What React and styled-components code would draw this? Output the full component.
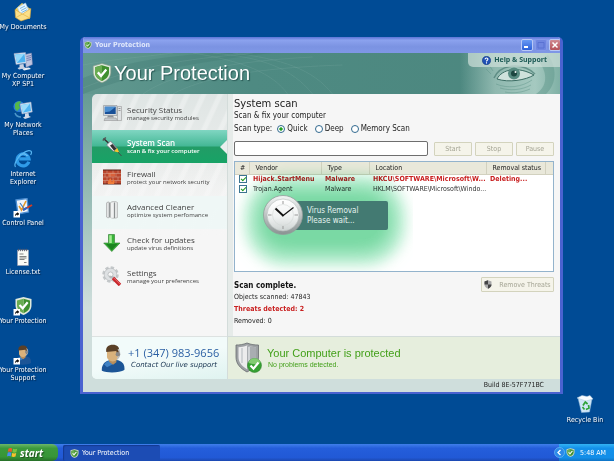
import React, { useState } from 'react';
import styled, { createGlobalStyle } from 'styled-components';

const GlobalStyle = createGlobalStyle`
  * {
    box-sizing: border-box;
  }

  body {
    margin: 0;
    background: #004b95;
    font-family: 'DejaVu Sans Condensed', 'DejaVu Sans', sans-serif;
    font-size: 7px;
    line-height: 8px;
    color: #222;
  }

  button, input {
    font: inherit;
    color: inherit;
    margin: 0;
  }

  button {
    cursor: pointer;
  }

  svg {
    display: block;
    flex: none;
  }
`;

const Page = styled.div`
  min-height: 100vh;
  display: flex;
  flex-direction: column;
`;

const Desktop = styled.main`
  flex: 1;
  display: grid;
  grid-template-columns: 80px minmax(0, 1fr) 51px;
`;

const IconColumn = styled.div`
  width: 46px;
  padding-top: 2px;
`;

const BinColumn = styled.div`
  align-self: end;
  padding-right: 7px;
`;

const Shortcut = styled.button`
  display: flex;
  flex-direction: column;
  align-items: center;
  gap: 1px;
  width: 100%;
  height: 49px;
  padding: 0;
  border: none;
  background: none;
  color: #fff;
  white-space: pre;
  text-align: center;
  text-shadow: 1px 1px 1px #00264f;
`;

/* application window */

const Window = styled.section`
  align-self: start;
  margin-top: 37px;
  border: 3px solid #4a62d0;
  border-top: none;
  border-bottom-width: 2px;
  border-radius: 5px 5px 0 0;
  background: #cfdedc;
  overflow: hidden;
`;

const TitleBar = styled.div`
  display: flex;
  align-items: center;
  gap: 2px;
  height: 16px;
  margin: 0 -3px;
  padding: 0 2px 0 4px;
  background: linear-gradient(#5b74d6, #8ba2ee 20%, #7b93e2 60%, #7f97e6);
`;

const TitleText = styled.h1`
  flex: 1;
  margin: 0;
  padding-left: 1px;
  font-size: 7px;
  color: #dfe7fb;
`;

const CaptionButton = styled.button`
  width: 12px;
  height: 12px;
  padding: 1px;
  border: 1px solid ${props => props.$edge || '#b8c8f6'};
  border-radius: 2px;
  background: ${props => props.$bg};
`;

const Banner = styled.header`
  position: relative;
  height: 41px;
  display: flex;
  align-items: center;
  justify-content: space-between;
  background: #4b867e;
  overflow: hidden;
`;

const BannerArt = styled.svg`
  position: absolute;
  top: 0;
  right: 0;
  width: 100%;
  height: 100%;
`;

const EyeArt = styled.svg`
  position: absolute;
  top: 0;
  right: 0;
`;

const Brand = styled.div`
  position: relative;
  display: flex;
  align-items: center;
  gap: 2px;
  padding-left: 9px;
  padding-bottom: 1px;
  font-family: 'Liberation Sans', Arial, sans-serif;
  font-size: 20px;
  line-height: 24px;
  color: #fff;
  text-shadow: 1px 1px 1px rgba(0, 40, 40, 0.5);
`;

const HelpLink = styled.a`
  position: relative;
  align-self: flex-start;
  display: flex;
  align-items: center;
  gap: 3px;
  height: 14px;
  padding: 0 13px 0 14px;
  border-radius: 0 0 0 5px;
  background: rgba(206, 224, 218, 0.7);
  font-family: 'Open Sans', 'Noto Sans', sans-serif;
  font-weight: 700;
  color: #1c5a55;
  text-decoration: none;
`;

const Content = styled.div`
  display: grid;
  grid-template-columns: 135px minmax(0, 1fr);
  padding-left: 9px;
  background: linear-gradient(#669b94, #a3c4be 45%, #cfdedc 75%);
`;

const Sidebar = styled.nav`
  display: flex;
  flex-direction: column;
  border-radius: 5px 0 0 5px;
  background: linear-gradient(transparent 25%, #f6f6f6 50%),
    repeating-linear-gradient(115deg, transparent 0 8px, rgba(255, 255, 255, 0.3) 10px 13px, transparent 15px),
    linear-gradient(#dfe5e4, #eceeed 28%, #f6f6f6 50%);
  overflow: hidden;
`;

const MenuButton = styled.button`
  position: relative;
  display: flex;
  align-items: center;
  gap: 5px;
  width: 100%;
  height: ${props => (props.$first ? 36 : 33)}px;
  padding: ${props => (props.$first ? '2px 0 0 10px' : props.$active ? '0 0 0 10px' : '0 0 5px 10px')};
  border: none;
  text-align: left;
  font-family: 'Open Sans', 'Noto Sans', sans-serif;
  color: ${props => (props.$active ? '#fff' : '#444')};
  background: ${props => {
    if (props.$active) return 'linear-gradient(#80d6c2, #45b896 48%, #229c66 52%, #17a366)';
    return props.$tint ? 'rgba(238, 248, 246, 0.8)' : 'none';
  }};

  &::after {
    content: '';
    display: ${props => (props.$active ? 'block' : 'none')};
    position: absolute;
    right: 0;
    top: 10px;
    border: solid transparent;
    border-width: 7px 7px 7px 0;
    border-right-color: #e9efee;
  }
`;

const MenuIcon = styled.span`
  width: 20px;
  display: flex;
  justify-content: center;
`;

const MenuTitle = styled.span`
  display: block;
  font-size: 8px;
  line-height: 9px;
  font-weight: ${props => (props.$active ? 600 : 400)};
`;

const MenuNote = styled.span`
  display: block;
  font-size: 6px;
  line-height: 8px;
  font-weight: ${props => (props.$active ? 600 : 500)};
`;

const Support = styled.div`
  display: flex;
  align-items: center;
  gap: 2px;
  height: 43px;
  margin-top: auto;
  padding-left: 9px;
  border-top: 1px solid #dde2e1;
  background: linear-gradient(170deg, #f2fbfa 50%, #dff3f0);
`;

const Phone = styled.div`
  font-family: 'Open Sans', 'Noto Sans', sans-serif;
  font-size: 11px;
  line-height: 14px;
  color: #2a5fa3;
`;

const Contact = styled.div`
  padding-left: 3px;
  font-family: 'DejaVu Sans', sans-serif;
  line-height: 10px;
  font-style: italic;
  color: #16324f;
`;

const Panel = styled.div`
  display: flex;
  flex-direction: column;
  background: #f6f6f6;
  border-left: 1px solid #d3dcda;
`;

const ScanArea = styled.div`
  flex: 1;
  padding: 4px 6px 9px 6px;
  background: linear-gradient(90deg, #e6ebe9 5px, #f6f6f6 5px);
`;

const Heading = styled.h2`
  margin: 0;
  font-family: 'DejaVu Sans', sans-serif;
  font-size: 10px;
  line-height: 12px;
  font-weight: 400;
`;

const Line = styled.div`
  font-size: 8px;
  line-height: 12px;
`;

const ScanTypes = styled.fieldset`
  display: flex;
  align-items: center;
  gap: 7px;
  height: 14px;
  margin: 0;
  padding: 0;
  border: none;
  font-size: 8px;

  label {
    display: flex;
    align-items: center;
    gap: 2px;
  }
`;

const TypeCaption = styled.span`
  margin-right: -2px;
`;

const Radio = styled.input`
  appearance: none;
  width: 8px;
  height: 8px;
  border: 1px solid #31698f;
  border-radius: 50%;
  background: #fff;

  &:checked {
    background: radial-gradient(#21a121 30%, #fff 50%);
  }
`;

const Toolbar = styled.div`
  display: flex;
  align-items: center;
  gap: 3px;
  margin: 5px 0;
`;

const Progress = styled.div`
  flex: 1;
  height: 15px;
  margin-right: 3px;
  border: 1px solid #6e6e6e;
  border-radius: 2px;
  background: #fff;
`;

const PushButton = styled.button`
  display: flex;
  align-items: center;
  justify-content: center;
  gap: 7px;
  width: ${props => (props.$wide ? 73 : 38)}px;
  height: ${props => (props.$wide ? 15 : 14)}px;
  padding: 0;
  border: 1px solid #d3d3bd;
  border-radius: 1px;
  background: #f5f4ea;
  color: #a5a595;
`;

const Results = styled.div`
  position: relative;
  height: 111px;
  border: 1px solid #93b3cc;
  background: #fff;
  overflow: hidden;
`;

const Table = styled.table`
  width: 100%;
  table-layout: fixed;
  border-collapse: collapse;
  white-space: nowrap;

  th {
    height: 12px;
    padding: 0 0 0 6px;
    background: #e9e8da;
    border-bottom: 1px solid #d2d1bf;
    border-right: 1px solid #d2d1bf;
    font-weight: 400;
    text-align: left;
  }

  th:first-child {
    padding-left: 5px;
  }

  th:last-child {
    border-right: none;
  }

  td {
    height: 10px;
    padding: 0 0 0 4px;
  }
`;

const Row = styled.tr`
  color: ${props => (props.$alert ? '#c92020' : '#333')};
  font-weight: ${props => (props.$alert ? 700 : 400)};
`;

const Check = styled.input`
  appearance: none;
  display: block;
  position: relative;
  z-index: 1;
  width: 8px;
  height: 8px;
  border: 1px solid #3b7490;
  background: #fff;

  &:checked::after {
    content: '';
    position: absolute;
    left: 2px;
    top: 0;
    width: 2px;
    height: 4px;
    border: solid #1d9a1d;
    border-width: 0 1px 1px 0;
    transform: rotate(45deg);
  }
`;

/* green halo behind the removal notice, cut off at its right edge */
const Glow = styled.div`
  position: absolute;
  left: 0;
  top: 0;
  width: 178px;
  height: 100%;
  overflow: hidden;
  mix-blend-mode: multiply;

  &::before {
    content: '';
    position: absolute;
    inset: 40px 34px 32px 36px;
    border-radius: 16px;
    background: #7ad9a4;
    box-shadow: 0 0 14px 12px #7ad9a4, 0 0 14px 26px rgba(150, 228, 185, 0.75);
  }
`;

const Toast = styled.div`
  position: absolute;
  left: 27px;
  top: 32px;
  display: flex;
  align-items: center;
`;

const ToastText = styled.div`
  width: 105px;
  height: 29px;
  margin-left: -21px;
  padding: 5px 0 0 24px;
  border-radius: 2px;
  background: #437a72;
  font-size: 8px;
  line-height: 10px;
  color: #e3f3ef;
`;

const ClockIcon = styled.svg`
  position: relative;
`;

const Summary = styled.div`
  display: flex;
  justify-content: space-between;
  align-items: flex-start;
  padding-top: 5px;
`;

const SummaryTitle = styled.div`
  padding-top: 4px;
  font-size: 8px;
  line-height: 10px;
  font-weight: 700;
  color: #111;
`;

const SummaryLine = styled.div`
  line-height: 12px;
  color: ${props => (props.$alert ? '#c92020' : '#222')};
  font-weight: ${props => (props.$alert ? 700 : 400)};
`;

const Status = styled.div`
  display: flex;
  align-items: center;
  gap: 5px;
  height: 43px;
  padding-left: 7px;
  border-top: 1px solid #d3dcda;
  background: #e6eedd;
  font-family: 'Liberation Sans', Arial, sans-serif;
  color: #43a01a;
`;

const StatusTitle = styled.div`
  font-size: 11px;
  line-height: 13px;
`;

const StatusNote = styled.div`
  padding-left: 1px;
  line-height: 9px;
`;

const Build = styled.footer`
  padding-right: 16px;
  line-height: 13px;
  text-align: right;
`;

/* task bar */

const Taskbar = styled.footer`
  display: flex;
  height: 17px;
  background: linear-gradient(#3f7eea, #245edb 25%, #2159d6 80%, #1c48b0);
  color: #fff;
`;

const StartButton = styled.button`
  display: flex;
  align-items: center;
  gap: 2px;
  width: 58px;
  padding: 0 0 0 7px;
  border: none;
  border-radius: 0 6px 6px 0;
  background: linear-gradient(#6cb66a, #3c9a3c 25%, #379537 75%, #276f28);
  font-family: 'Open Sans', 'Noto Sans', sans-serif;
  font-size: 10px;
  font-weight: 700;
  font-style: italic;
  line-height: 14px;
  text-shadow: 1px 1px 1px #1d4f1d;
`;

const TaskButton = styled.button`
  display: flex;
  align-items: center;
  gap: 3px;
  width: 97px;
  height: 16px;
  margin: 1px auto 0 5px;
  padding: 0 0 0 7px;
  border: none;
  border-radius: 2px;
  background: #1c4cb4;
  box-shadow: inset 1px 1px 1px #143a92;
`;

const Tray = styled.div`
  display: flex;
  align-items: center;
  gap: 1px;
  padding-right: 8px;
  background: linear-gradient(#33b4f4, #1390ea 25%, #138ee8 80%, #0f74c4);

  svg:first-child {
    margin-left: -5px;
  }

  time {
    margin-left: 4px;
  }
`;

function ShieldIcon({ size = 20 }) {
  return (
    <svg width={size} height={size} viewBox="0 0 20 20">
      <path d="M10 .5 18.800 3v6.200c0 5-3.600 8.600-8.800 10.500C4.800 17.800 1.200 14.200 1.200 9.200V3Z" fill="#dfe9dc" stroke="#879a86" strokeWidth=".6" />
      <path d="M10 2.300 17 4.300v5c0 4-2.800 6.900-7 8.600C5.800 16.200 3 13.300 3 9.300v-5Z" fill="#3f8f2f" />
      <path d="M10 2.300V17.900C5.800 16.200 3 13.300 3 9.300v-5Z" fill="#69ac52" />
      <path d="m5.800 9.400 3.200 3.500 5.300-6.500" fill="none" stroke="#fff" strokeWidth="2.300" />
    </svg>
  );
}

function ShortcutArrow() {
  return (
    <g>
      <path d="M.5 13h6.500v6.500H.5Z" fill="#fff" />
      <path d="M2 18.300c0-2 .8-3 2.300-3.200V14l2 1.900-2 1.900v-1.100c-1 0-1.700.5-2.300 1.600Z" fill="#111" />
    </g>
  );
}

function DocumentsIcon() {
  return (
    <svg width="20" height="20" viewBox="0 0 20 20">
      <path d="M2.500 7 9 1l8.500 6-1 10-13-1Z" fill="#f3cf58" />
      <path d="m4.500 5.500 8-4.500 4 9-8.500 5Z" fill="#eaf6ff" stroke="#9fc7e4" strokeWidth=".6" />
      <path d="m7 6.500 5-2.500M8 8.500l5.500-2.800M8.600 10.500l5.500-2.800" stroke="#59a9dd" strokeWidth=".8" />
      <path d="m2 7.500 7.500 4.500 8.300-5.500-.8 9.500-9 3-5.500-3.500Z" fill="#fbe08a" stroke="#d5a336" strokeWidth=".6" />
      <path d="m3 15.500 6.500-3.500 7.300 4" fill="none" stroke="#e0b548" strokeWidth=".7" />
    </svg>
  );
}

function ComputerIcon() {
  return (
    <svg width="20" height="20" viewBox="0 0 20 20">
      <path d="M12 3.500 18.500 2l1 11.500-6.500 3Z" fill="#bfc5e0" stroke="#6e78a8" strokeWidth=".5" />
      <path d="m13.500 5.500 4.500-1M13.500 7.500l4.500-1M13.500 9.500l4.500-1" stroke="#5562a0" strokeWidth=".7" />
      <path d="m1 2.500 11.500-1L13.500 12 3 13.500Z" fill="#dfe7f5" stroke="#8797b7" strokeWidth=".5" />
      <path d="m2.200 3.600 9.300-.8 1 8.200-8.500 1Z" fill="#4cb2f0" />
      <path d="m2.200 3.600 9.300-.8-7.500 9.200Z" fill="#93d8fb" />
      <path d="m6.500 13.500 4-.5.5 3 2 1-7 1.500-1.500-1.500 2-.8Z" fill="#c9d1e3" />
      <path d="m9 17.500 7-1 2 1.500-7 1.500Z" fill="#e9edf5" />
    </svg>
  );
}

function NetworkIcon() {
  return (
    <svg width="20" height="20" viewBox="0 0 20 20">
      <circle cx="6" cy="6.500" r="5.500" fill="#2c7fd6" />
      <path d="M2 4c2-3 5-3.500 6-2L6 5l1 3-3 3-2-2.500Z" fill="#55b848" />
      <path d="m7 4 11-2 1.300 10L9 14Z" fill="#dce6f5" stroke="#8698b8" strokeWidth=".5" />
      <path d="m8.200 5 8.900-1.600 1 7.600-8.200 1.700Z" fill="#4fb5f2" />
      <path d="m8.200 5 8.900-1.600-7.200 9.300Z" fill="#9adcfb" />
      <path d="m12 13.500 3.500-.5.5 3 2 1-6 2-2-1.500 2-1Z" fill="#d2dae8" />
      <path d="M2 13c1 3 3 4 6 4" fill="none" stroke="#4a95c9" strokeWidth="1.500" />
    </svg>
  );
}

function ExplorerIcon() {
  return (
    <svg width="20" height="20" viewBox="0 0 20 20">
      <path d="M15.800 12.800A6 6 0 1 1 16 9.800H6.200" fill="none" stroke="#2f9be8" strokeWidth="3.200" />
      <path d="M14.500 7A5 5 0 0 0 6 7.500" fill="none" stroke="#8fd3fa" strokeWidth="1" />
      <path d="M2.500 18C.5 15.500 4 9 9 5s9.500-4.500 9.500-1.500c0 .8-.4 1.600-.9 2.500" fill="none" stroke="#57b6f2" strokeWidth="1.200" />
    </svg>
  );
}

function ControlPanelIcon() {
  return (
    <svg width="20" height="20" viewBox="0 0 20 20">
      <path d="m3 2 11-1.500L15.500 14 5 16Z" fill="#eef4fb" stroke="#4e8fd2" strokeWidth="1.300" />
      <path d="m6 8 2.500 4L13 3" fill="none" stroke="#e49a2a" strokeWidth="1.600" />
      <path d="m7 5 5 7" stroke="#417fc6" strokeWidth="1.200" />
      <path d="m10 12 9-5" stroke="#d33d22" strokeWidth="2" />
      <path d="m10 12 4-2.200" stroke="#2d66c6" strokeWidth="2" />
      <ShortcutArrow />
    </svg>
  );
}

function TextFileIcon() {
  return (
    <svg width="20" height="20" viewBox="0 0 20 20">
      <path d="M4.500 3h11v15.500h-11Z" fill="#fbfbf6" stroke="#99a" strokeWidth=".6" />
      <path d="M5.500 1.800v2.400m2-2.400v2.400m2-2.400v2.400m2-2.400v2.400m2-2.400v2.400" stroke="#556" strokeWidth=".8" />
      <path d="M6.500 7h4M6.500 9.500h7M6.500 11h7M6.500 12.500h5M11 15.500h2.500" stroke="#666" strokeWidth=".8" />
    </svg>
  );
}

function ShieldShortcutIcon() {
  return (
    <svg width="20" height="20" viewBox="0 0 20 20">
      <path d="M10.500 1 18.500 3v6c0 5-3 8-8 10-5-2-8-5-8-10V3Z" fill="#dfe9dc" />
      <path d="M10.500 2.800 17 4.500V9c0 4-2.500 6.500-6.500 8.300Z" fill="#3f8f2f" />
      <path d="M10.500 2.800v14.500C6.500 15.500 4 13 4 9V4.500Z" fill="#69ac52" />
      <path d="m6.500 9 3.200 3.300 5-6" fill="none" stroke="#fff" strokeWidth="2.200" />
      <ShortcutArrow />
    </svg>
  );
}

function AgentFigure() {
  return (
    <g>
      <path d="M2.500 18.500c-.5-4 2-7 6-7.500h4c4 .5 6 3 5.500 7-3 2-12 2.300-15.500.5Z" fill="#1c5596" />
      <path d="M4 14c1.500-2 3-2.500 4.500-2.700L10 14l-4 2Z" fill="#3f82c4" />
      <path d="M7.500 10h5v2.500l-2.300 1.800-2.700-2Z" fill="#b98e5b" />
      <path d="M6 3.500h7.500V9c0 2-1.500 3-3.500 3S6 10.500 6 9Z" fill="#d9b27c" />
      <path d="M5.500 5.500C5 2 7 .6 10 .6s5 1.700 4.300 5l-.9 3-1-3.800Z" fill="#5a4027" />
      <path d="M13.700 3.500c1.500 2 1.500 5-.7 7" fill="none" stroke="#bbb" strokeWidth="1" />
      <circle cx="13.500" cy="7" r="1.500" fill="#888" />
    </g>
  );
}

function AgentIcon() {
  return (
    <svg width="25" height="29" viewBox="2 0 17 20">
      <AgentFigure />
    </svg>
  );
}

function AgentShortcutIcon() {
  return (
    <svg width="20" height="20" viewBox="0 0 20 20">
      <AgentFigure />
      <ShortcutArrow />
    </svg>
  );
}

function BinIcon() {
  return (
    <svg width="20" height="20" viewBox="0 0 20 20">
      <path d="m3 3 14 1-2.500 13-8 .5Z" fill="#cfe6f7" stroke="#8db6d8" strokeWidth=".5" />
      <path d="m2 3 5-2.500 5 1 3-1 3 3.500-7 2Z" fill="#f8fcff" stroke="#a9c7df" strokeWidth=".5" />
      <path d="M8 10.500 10.300 7l2.300 2M13.500 10l.5 3-3 1.500M9.500 14.500 7.500 12" fill="none" stroke="#2fa33a" strokeWidth="1.700" />
    </svg>
  );
}

function MonitorIcon() {
  return (
    <svg width="19" height="18" viewBox="0 0 19 18">
      <path d="M14.500 2.500h4v14h-4Z" fill="#dfe2e4" stroke="#999" strokeWidth=".6" />
      <path d="M15.500 4.500h2M15.500 6.500h2" stroke="#777" strokeWidth=".7" />
      <path d="M.5 1.500h13.500v10H.5Z" fill="#d5d9dd" stroke="#8b9095" strokeWidth=".6" />
      <path d="M1.800 2.800h10.900v7.300H1.800Z" fill="#174f97" />
      <path d="M1.800 2.800h10.900l-6 4.700-4.900.8Z" fill="#4b8fd0" />
      <path d="M5 11.500h5l1 2H4Z" fill="#8d9297" />
      <path d="M2 14h11l1.500 2.500H1Z" fill="#c7cbcf" stroke="#888" strokeWidth=".5" />
    </svg>
  );
}

function SyringeIcon() {
  return (
    <svg width="20" height="20" viewBox="0 0 20 20">
      <path d="m1.500 1.500 5 4.500" stroke="#333" strokeWidth="1.500" />
      <path d="m.8 3.500 3-3" stroke="#555" strokeWidth="1.500" />
      <path d="m4.500 8 4-4 6.500 7-3.500 3.500Z" fill="#edf1f1" stroke="#667" strokeWidth=".7" />
      <path d="m8 8.500 2.500-1.500 4 4.500-2.500 2.300Z" fill="#333" />
      <path d="m12 14.300 3.200-3.200 2.200 4.600Z" fill="#f4c430" />
      <path d="m16 15 3.500 4" stroke="#444" strokeWidth=".9" />
    </svg>
  );
}

function FirewallIcon() {
  return (
    <svg width="18" height="16" viewBox="0 0 18 16">
      <path d="M0 1h18v14H0Z" fill="#b9452c" />
      <path d="M5 3.500h7v4H5Z" fill="#d9633c" />
      <path d="M0 4.500h18M0 8h18M0 11.500h18M4 1v3.500M10 1v3.500M15 1v3.500M2 4.500V8M7 4.500V8M13 4.500V8M4 8v3.500M10 8v3.500M15 8v3.500M2 11.500V15M7 11.500V15M13 11.500V15" stroke="#dba994" strokeWidth=".5" />
      <path d="M0 1h18M0 15h18" stroke="#5b2318" />
      <path d="M5 15c-1-3 2-4 2-6 2 2 1 3 2 4 1-1 1-2 1-3 2 2 2 3 1 5Z" fill="#ef7b39" />
    </svg>
  );
}

function CleanerIcon() {
  return (
    <svg width="12" height="18" viewBox="0 0 12 18">
      <path d="M.5 2c1-1.500 2.500-1.500 3.500 0v14c-1 1-2.500 1-3.500 0Z" fill="#c9cccd" stroke="#999" strokeWidth=".5" />
      <path d="M4.500 1.500c1.500-1.500 5.500-1.500 7 0v15c-1.500 1-5.500 1-7 0Z" fill="#e3e5e5" stroke="#999" strokeWidth=".5" />
      <path d="M6 2v15M2 2v14" stroke="#fff" strokeWidth="1" />
      <path d="M8.500 1.500V17M3.300 2v14" stroke="#8b8f90" strokeWidth="1" />
    </svg>
  );
}

function DownloadIcon() {
  return (
    <svg width="18" height="18" viewBox="0 0 18 18">
      <path d="M5.500.5h6V9H17l-8.200 8.500L.7 9h4.800Z" fill="#38b338" stroke="#2b7c2b" strokeWidth=".6" />
      <path d="M6.200 1.200h2.600V9H6.200Z" fill="#a4ec93" />
      <path d="m3 10 12-.2-6.200 6.500Z" fill="#1c8420" />
    </svg>
  );
}

function SettingsIcon() {
  return (
    <svg width="20" height="20" viewBox="0 0 20 20">
      <circle cx="8.500" cy="8.500" r="7" fill="none" stroke="#c4c8ca" strokeWidth="2.500" strokeDasharray="3.300 2.200" />
      <circle cx="8.500" cy="8.500" r="6.300" fill="#dee1e3" stroke="#b0b4b6" strokeWidth=".6" />
      <circle cx="8.500" cy="8.500" r="2.500" fill="#f8f8f8" stroke="#a5a9ab" strokeWidth=".6" />
      <path d="M7.500 9.500c-1 1 0 3.500 2.500 3l5.500 6 2-2-5.500-6" fill="#b5b9bc" />
      <path d="m11 12 7 7" stroke="#c9262b" strokeWidth="3.400" />
      <path d="m11.500 11.700 6.500 6.500" stroke="#f0797a" strokeWidth=".8" />
    </svg>
  );
}

function HelpIcon() {
  return (
    <svg width="9" height="9" viewBox="0 0 9 9">
      <circle cx="4.500" cy="4.500" r="4.200" fill="#1f50b4" stroke="#123679" strokeWidth=".5" />
      <path d="M3 3.400C3.200 1.500 6 1.700 5.900 3.300 5.800 4.300 4.500 4.200 4.500 5.500M4.500 6.300v1.200" fill="none" stroke="#fff" strokeWidth="1.100" />
    </svg>
  );
}

function SilverShieldIcon() {
  return (
    <svg width="27" height="32" viewBox="0 0 27 32">
      <path d="M12 1c4 1.700 8 2 11.500 2v12c0 7-5 11.500-11.500 15C5.500 26.500 1 22 1 15V3c3.500 0 7-.3 11-2Z" fill="#9da1a4" stroke="#676b6e" strokeWidth=".8" />
      <path d="M12 3.500c3 1.200 6 1.600 9 1.700V15c0 5.500-3.700 9-9 12.200C7 24 3.500 20.500 3.500 15V5.200c2.800-.1 5.500-.5 8.500-1.700Z" fill="#ececed" />
      <path d="M12 3.500c3 1.200 6 1.600 9 1.700V15c0 5.500-3.700 9-9 12.200Z" fill="#a9adb1" />
      <path d="M14 5v20M7 6v15" stroke="#cfd2d5" strokeWidth="2" />
      <circle cx="19.500" cy="23.500" r="7" fill="#36a033" stroke="#2a7a28" strokeWidth=".5" />
      <path d="M13.500 21a6.200 6.200 0 0 1 12 0c-4 1.500-8 1.500-12 0Z" fill="#82cc72" />
      <path d="m15.500 23.500 3 3.200 5-6.200" fill="none" stroke="#fff" strokeWidth="2.200" />
    </svg>
  );
}

function Clock() {
  return (
    <ClockIcon width="42" height="42" viewBox="0 0 42 42">
      <defs>
        <linearGradient id="rim" x1="0" y1="0" x2="0" y2="1">
          <stop offset="0" stopColor="#f4f6f6" />
          <stop offset="1" stopColor="#8a9292" />
        </linearGradient>
        <linearGradient id="face" x1="0" y1="0" x2="0" y2="1">
          <stop offset="0" stopColor="#ffffff" />
          <stop offset=".55" stopColor="#f0f2f2" />
          <stop offset="1" stopColor="#cdd3d2" />
        </linearGradient>
      </defs>
      <circle cx="21" cy="21" r="19.500" fill="url(#rim)" stroke="#939c9a" strokeWidth=".8" />
      <circle cx="21" cy="21" r="16" fill="url(#face)" stroke="#b5bcbb" strokeWidth=".6" />
      <path d="M21 7v3M21 32v3M6 21h3.500M32.500 21H36" stroke="#999" strokeWidth="1" />
      <circle cx="21" cy="21" r="10.500" fill="none" stroke="#d3d8d7" strokeWidth=".6" />
      <path d="m13.500 14.500 8 7.500" stroke="#111" strokeWidth="1.900" />
      <path d="m20.500 22 11-8.500" stroke="#111" strokeWidth="1.200" />
    </ClockIcon>
  );
}

function WindowsFlag() {
  return (
    <svg width="11" height="11" viewBox="0 0 11 11">
      <path d="M1.500 1.500c1.500-.8 2.500-.6 3.800 0l-.7 3.600C3.300 4.500 2.200 4.400.8 5Z" fill="#ee5a2b" />
      <path d="M6 1.800c1.500.7 2.700.6 4.200 0l-.8 3.500c-1.400.7-2.700.6-4 0Z" fill="#7cc242" />
      <path d="M.7 5.800c1.500-.7 2.500-.5 3.700 0l-.7 3.600C2.500 8.800 1.400 8.800 0 9.400Z" fill="#4a8df0" />
      <path d="M5.200 6.100c1.400.6 2.600.6 4 0l-.7 3.500c-1.400.6-2.700.6-4 0Z" fill="#fbc02d" />
    </svg>
  );
}

function TrayArrow() {
  return (
    <svg width="11" height="11" viewBox="0 0 11 11">
      <circle cx="5.500" cy="5.500" r="5" fill="#2b8ae8" stroke="#7fc6f8" strokeWidth=".6" />
      <path d="M6.500 3 4 5.500 6.500 8" fill="none" stroke="#fff" strokeWidth="1.300" />
    </svg>
  );
}

function BannerLines() {
  return (
    <BannerArt viewBox="0 0 478 41" preserveAspectRatio="none">
      <defs>
        <linearGradient id="banner">
          <stop offset="0" stopColor="#629990" />
          <stop offset=".35" stopColor="#4e8a82" />
          <stop offset="1" stopColor="#4c877f" />
        </linearGradient>
      </defs>
      <path d="M0 0h478v41H0Z" fill="url(#banner)" />
      <path d="M0 25C50 5 110 0 150 0h40C120 8 60 18 0 41Z" fill="#3f7871" opacity=".3" />
      <path d="M60 41C90 20 150 8 230 4M90 41C120 25 170 15 260 12M0 12C30 6 60 4 90 0M130 0c50 4 80 16 100 41M110 0c50 8 80 20 95 41M150 0c50 6 80 16 100 41M0 35C60 10 120 5 170 0" fill="none" stroke="#8fbbb4" strokeWidth=".7" opacity=".25" />
    </BannerArt>
  );
}

function Eye() {
  return (
    <EyeArt width="100" height="41" viewBox="0 0 100 41">
      <defs>
        <linearGradient id="skin">
          <stop offset="0" stopColor="#8fb8af" stopOpacity="0" />
          <stop offset=".35" stopColor="#8fb8af" />
          <stop offset=".75" stopColor="#a5c9c0" />
          <stop offset="1" stopColor="#7fb0a5" />
        </linearGradient>
      </defs>
      <path d="M0 0h100v41H0Z" fill="url(#skin)" />
      <path d="M76 41C90 32 86 16 78 8l10-6c10 14 8 30-2 39Z" fill="#5f978c" opacity=".5" />
      <path d="M34 25c6-14 28-16 41-4" fill="none" stroke="#3d7269" strokeWidth="1.500" opacity=".6" />
      <path d="M37 26c5-10 21-13 37-4-8 5-25 8-37 4Z" fill="#cfe2dc" stroke="#3b6c63" strokeWidth="1" />
      <circle cx="54" cy="20.500" r="6" fill="#568b80" />
      <circle cx="54" cy="20.500" r="3" fill="#1c4740" />
      <circle cx="55.500" cy="19" r="1" fill="#eef6f3" />
      <path d="M36 31c12 5 26 3 36-4M40 35c10 3 22 2 31-3M45 39c9 2 18 0 25-3M31 21l-5-5M33 18l-4-6" fill="none" stroke="#5a9085" strokeWidth=".7" opacity=".6" />
    </EyeArt>
  );
}

const shortcuts = [
  { label: 'My Documents', icon: <DocumentsIcon /> },
  { label: 'My Computer\nXP SP1', icon: <ComputerIcon /> },
  { label: 'My Network\nPlaces', icon: <NetworkIcon /> },
  { label: 'Internet\nExplorer', icon: <ExplorerIcon /> },
  { label: 'Control Panel', icon: <ControlPanelIcon /> },
  { label: 'License.txt', icon: <TextFileIcon /> },
  { label: 'Your Protection', icon: <ShieldShortcutIcon /> },
  { label: 'Your Protection\nSupport', icon: <AgentShortcutIcon /> },
];

const menu = [
  { title: 'Security Status', note: 'manage security modules', icon: <MonitorIcon /> },
  { title: 'System Scan', note: 'scan & fix your computer', icon: <SyringeIcon />, active: true },
  { title: 'Firewall', note: 'protect your network security', icon: <FirewallIcon /> },
  { title: 'Advanced Cleaner', note: 'optimize system perfomance', icon: <CleanerIcon />, tint: true },
  { title: 'Check for updates', note: 'update virus definitions', icon: <DownloadIcon /> },
  { title: 'Settings', note: 'manage your preferences', icon: <SettingsIcon /> },
];

const threats = [
  { vendor: 'Hijack.StartMenu', type: 'Malware', location: 'HKCU\\SOFTWARE\\Microsoft\\W...', status: 'Deleting...', alert: true },
  { vendor: 'Trojan.Agent', type: 'Malware', location: 'HKLM\\SOFTWARE\\Microsoft\\Windo...', status: '' },
];

function SideMenu() {
  return (
    <Sidebar>
      {menu.map((item, i) => (
        <MenuButton key={item.title} $first={i === 0} $active={item.active} $tint={item.tint}>
          <MenuIcon>{item.icon}</MenuIcon>
          <span>
            <MenuTitle $active={item.active}>{item.title}</MenuTitle>
            <MenuNote $active={item.active}>{item.note}</MenuNote>
          </span>
        </MenuButton>
      ))}
      <Support>
        <AgentIcon />
        <div>
          <Phone>+1 (347) 983-9656</Phone>
          <Contact>Contact Our live support</Contact>
        </div>
      </Support>
    </Sidebar>
  );
}

function ResultList() {
  return (
    <Results>
      <Table>
        <colgroup>
          <col width="14" />
          <col width="72" />
          <col width="48" />
          <col />
          <col width="59" />
          <col width="8" />
        </colgroup>
        <thead>
          <tr>
            <th>#</th>
            <th>Vendor</th>
            <th>Type</th>
            <th>Location</th>
            <th>Removal status</th>
            <th />
          </tr>
        </thead>
        <tbody>
          {threats.map(t => (
            <Row key={t.vendor} $alert={t.alert}>
              <td><Check type="checkbox" defaultChecked aria-label={t.vendor} /></td>
              <td>{t.vendor}</td>
              <td>{t.type}</td>
              <td>{t.location}</td>
              <td>{t.status}</td>
              <td />
            </Row>
          ))}
        </tbody>
      </Table>
      <Glow />
      <Toast role="status">
        <Clock />
        <ToastText>Virus Removal<br />Please wait...</ToastText>
      </Toast>
    </Results>
  );
}

function ScanPanel() {
  const [scanType, setScanType] = useState('Quick');

  return (
    <Panel>
      <ScanArea>
        <Heading>System scan</Heading>
        <Line>Scan &amp; fix your computer</Line>
        <ScanTypes>
          <TypeCaption>Scan type:</TypeCaption>
          {['Quick', 'Deep', 'Memory Scan'].map(type => (
            <label key={type}>
              <Radio
                type="radio"
                name="scan"
                checked={scanType === type}
                onChange={() => setScanType(type)}
              />
              {type}
            </label>
          ))}
        </ScanTypes>
        <Toolbar>
          <Progress role="progressbar" aria-label="Scan progress" />
          <PushButton disabled>Start</PushButton>
          <PushButton disabled>Stop</PushButton>
          <PushButton disabled>Pause</PushButton>
        </Toolbar>
        <ResultList />
        <Summary>
          <div>
            <SummaryTitle>Scan complete.</SummaryTitle>
            <SummaryLine>Objects scanned: 47843</SummaryLine>
            <SummaryLine $alert>Threats detected: 2</SummaryLine>
            <SummaryLine>Removed: 0</SummaryLine>
          </div>
          <PushButton $wide disabled>
            <svg width="8" height="9" viewBox="0 0 8 9">
              <path d="M4 .3 7.500 1.500v3C7.500 6.500 6 8 4 8.800 2 8 .5 6.500.5 4.500v-3Z" fill="#a9a9a9" />
              <path d="M4 .3v4.200H.5v-3ZM4 4.500h3.500C7.500 6.500 6 8 4 8.800Z" fill="#444" />
            </svg>
            Remove Threats
          </PushButton>
        </Summary>
      </ScanArea>
      <Status>
        <SilverShieldIcon />
        <div>
          <StatusTitle>Your Computer is protected</StatusTitle>
          <StatusNote>No problems detected.</StatusNote>
        </div>
      </Status>
    </Panel>
  );
}

function ProtectionWindow() {
  return (
    <Window>
      <TitleBar>
        <ShieldIcon size={8} />
        <TitleText>Your Protection</TitleText>
        <CaptionButton $bg="linear-gradient(#6a9af4, #2b5fd8)" aria-label="Minimize">
          <svg width="8" height="8" viewBox="0 0 8 8"><path d="M1 6h4" stroke="#fff" strokeWidth="2" /></svg>
        </CaptionButton>
        <CaptionButton $bg="#6f86e0" $edge="#8499e8" aria-label="Maximize">
          <svg width="8" height="8" viewBox="0 0 8 8"><path d="M1 1.500h6v5.500H1Z" fill="none" stroke="#5a72d2" /></svg>
        </CaptionButton>
        <CaptionButton $bg="linear-gradient(#d08a92, #b5525a)" aria-label="Close">
          <svg width="8" height="8" viewBox="0 0 8 8"><path d="m1.500 1.500 5 5m0-5-5 5" stroke="#fff" strokeWidth="1.500" /></svg>
        </CaptionButton>
      </TitleBar>
      <Banner>
        <BannerLines />
        <Eye />
        <Brand>
          <ShieldIcon size={20} />
          Your Protection
        </Brand>
        <HelpLink href="#help">
          <HelpIcon />
          Help &amp; Support
        </HelpLink>
      </Banner>
      <Content>
        <SideMenu />
        <ScanPanel />
      </Content>
      <Build>Build 8E-57F771BC</Build>
    </Window>
  );
}

function App() {
  return (
    <Page>
      <GlobalStyle />
      <Desktop>
        <IconColumn>
          {shortcuts.map(item => (
            <Shortcut key={item.label}>
              {item.icon}
              {item.label}
            </Shortcut>
          ))}
        </IconColumn>
        <ProtectionWindow />
        <BinColumn>
          <Shortcut>
            <BinIcon />
            Recycle Bin
          </Shortcut>
        </BinColumn>
      </Desktop>
      <Taskbar>
        <StartButton>
          <WindowsFlag />
          start
        </StartButton>
        <TaskButton>
          <ShieldIcon size={9} />
          Your Protection
        </TaskButton>
        <Tray>
          <TrayArrow />
          <ShieldIcon size={9} />
          <time>5:48 AM</time>
        </Tray>
      </Taskbar>
    </Page>
  );
}

export default App;
